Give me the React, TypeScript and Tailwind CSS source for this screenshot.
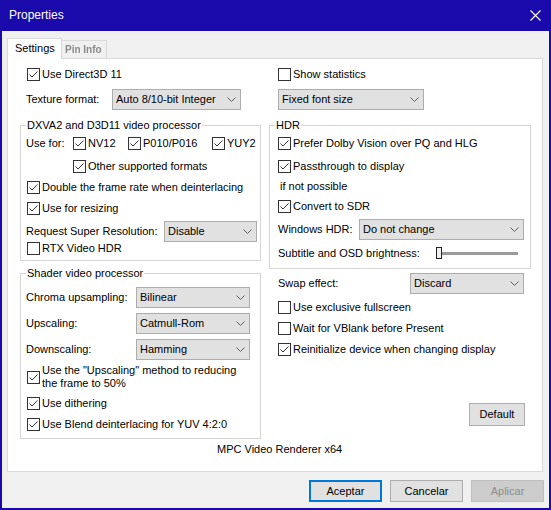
import type { ReactNode } from "react";

function Check({ checked, children, className = "" }: { checked?: boolean; children: ReactNode; className?: string }) {
  return (
    <div className={`flex items-center gap-[2px] ${className}`}>
      <span className="w-[13px] h-[13px] shrink-0 border border-[#333333] bg-white flex">
        {checked && (
          <svg width="11" height="11" viewBox="0 0 11 11">
            <path d="M1.5 5.5 L4 8 L9.5 2.5" fill="none" stroke="#333333" strokeWidth="1" />
          </svg>
        )}
      </span>
      <span>{children}</span>
    </div>
  );
}

function Combo({ value, className = "" }: { value: string; className?: string }) {
  return (
    <div className={`h-[21px] flex items-center justify-between bg-[#e1e1e1] border border-[#adadad] pl-[3px] pr-[4px] ${className}`}>
      <span>{value}</span>
      <svg width="9" height="5" viewBox="0 0 9 5">
        <path d="M0.5 0.5 L4.5 4.5 L8.5 0.5" fill="none" stroke="#606060" strokeWidth="1" />
      </svg>
    </div>
  );
}

function Group({ title, className = "", children }: { title: string; className?: string; children: ReactNode }) {
  return (
    <div className={`relative border border-[#d5d5d5] ${className}`}>
      <span className="absolute top-[-7px] left-[5px] px-[1px] bg-white leading-[13px]">{title}</span>
      {children}
    </div>
  );
}

export default function App() {
  return (
    <div
      className="w-[551px] h-[510px] flex flex-col bg-[#f0f0f0] border-x-2 border-b-2 border-[#1a0aac] text-[11px] leading-[13px] text-black"
      style={{ fontFamily: '"Liberation Sans", Arial, sans-serif' }}
    >
      <div className="h-[31px] shrink-0 bg-[#1a0aac] flex items-center justify-between pl-[7px] pr-[8px] text-white text-[12px]">
        <span>Properties</span>
        <svg width="11" height="11" viewBox="0 0 11 11">
          <path d="M0.5 0.5 L10.5 10.5 M10.5 0.5 L0.5 10.5" stroke="#ffffff" strokeWidth="1.1" />
        </svg>
      </div>

      <div className="mt-[7px] ml-[5px] h-[21px] flex items-end relative z-10 -mb-[1px]">
        <div className="h-[21px] w-[55px] bg-white border-x border-t border-[#d9d9d9] flex items-center pl-[7px] pb-[1px]">
          Settings
        </div>
        <div className="h-[19px] w-[45px] bg-[#f0f0f0] border-t border-r border-b border-[#d9d9d9] flex items-center pl-[3px]">
          <span className="blur-[0.7px] text-[#8a8a8a] font-bold text-[10px]">Pin Info</span>
        </div>
      </div>

      <div className="ml-[5px] w-[536px] h-[414px] bg-white border border-[#d9d9d9] pl-[12px] pt-[7px] flex flex-col">
        <div className="flex">
          {/* left column */}
          <div className="w-[241px] flex flex-col">
            <Check checked className="h-[16px] ml-[7px]">Use Direct3D 11</Check>
            <div className="mt-[7px] flex items-center">
              <span className="ml-[6px] w-[86px]">Texture format:</span>
              <Combo value="Auto 8/10-bit Integer" className="w-[129px]" />
            </div>

            <Group title="DXVA2 and D3D11 video processor" className="mt-[15px] h-[136px]">
              <div className="mt-[9px] h-[16px] flex items-center">
                <span className="ml-[5px] w-[47px]">Use for:</span>
                <Check checked className="w-[55px]">NV12</Check>
                <Check checked className="w-[84px]">P010/P016</Check>
                <Check checked>YUY2</Check>
              </div>
              <Check checked className="mt-[7px] h-[16px] ml-[52px]">Other supported formats</Check>
              <Check checked className="mt-[5px] h-[16px] ml-[6px]">Double the frame rate when deinterlacing</Check>
              <Check checked className="mt-[5px] h-[16px] ml-[6px]">Use for resizing</Check>
              <div className="mt-[5px] flex items-center">
                <span className="ml-[5px] w-[138px]">Request Super Resolution:</span>
                <Combo value="Disable" className="w-[93px]" />
              </div>
              <Check className="-mt-[2px] h-[16px] ml-[6px]">RTX Video HDR</Check>
            </Group>

            <Group title="Shader video processor" className="mt-[12px] h-[166px]">
              <div className="mt-[13px] flex items-center">
                <span className="ml-[5px] w-[110px]">Chroma upsampling:</span>
                <Combo value="Bilinear" className="w-[114px]" />
              </div>
              <div className="mt-[5px] flex items-center">
                <span className="ml-[5px] w-[110px]">Upscaling:</span>
                <Combo value="Catmull-Rom" className="w-[114px]" />
              </div>
              <div className="mt-[5px] flex items-center">
                <span className="ml-[5px] w-[110px]">Downscaling:</span>
                <Combo value="Hamming" className="w-[114px]" />
              </div>
              <Check checked className="mt-[4px] ml-[6px]">
                Use the "Upscaling" method to reducing
                <br />
                the frame to 50%
              </Check>
              <Check checked className="mt-[5px] h-[16px] ml-[6px]">Use dithering</Check>
              <Check checked className="mt-[5px] h-[16px] ml-[6px]">Use Blend deinterlacing for YUV 4:2:0</Check>
            </Group>
          </div>

          {/* right column */}
          <div className="ml-[8px] w-[262px] flex flex-col">
            <Check className="h-[16px] ml-[9px]">Show statistics</Check>
            <Combo value="Fixed font size" className="mt-[7px] ml-[9px] w-[146px]" />

            <Group title="HDR" className="mt-[15px] h-[144px]">
              <Check checked className="mt-[9px] h-[16px] ml-[8px]">Prefer Dolby Vision over PQ and HLG</Check>
              <Check checked className="mt-[7px] h-[16px] ml-[8px]">Passthrough to display</Check>
              <div className="mt-[4px] h-[16px] ml-[10px] flex items-center">if not possible</div>
              <Check checked className="mt-[4px] h-[16px] ml-[8px]">Convert to SDR</Check>
              <div className="mt-[5px] flex items-center">
                <span className="ml-[8px] w-[81px]">Windows HDR:</span>
                <Combo value="Do not change" className="w-[165px]" />
              </div>
              <div className="mt-[5px] h-[16px] flex items-center">
                <span className="ml-[8px] w-[158px]">Subtitle and OSD brightness:</span>
                <span className="w-[6px] h-[12px] border border-[#222222] bg-[#f0f0f0] shrink-0" />
                <span className="w-[76px] h-[3px] bg-[#9a9a9a]" />
              </div>
            </Group>

            <div className="mt-[4px] flex items-center">
              <span className="ml-[9px] w-[132px]">Swap effect:</span>
              <Combo value="Discard" className="w-[114px]" />
            </div>
            <Check className="mt-[5px] h-[16px] ml-[9px]">Use exclusive fullscreen</Check>
            <Check className="mt-[5px] h-[16px] ml-[9px]">Wait for VBlank before Present</Check>
            <Check checked className="mt-[5px] h-[16px] ml-[9px]">Reinitialize device when changing display</Check>
            <button className="mt-[46px] ml-[200px] w-[56px] h-[23px] bg-[#e1e1e1] border border-[#adadad]">
              Default
            </button>
          </div>
        </div>
        <div className="mt-[4px] ml-[197px]">MPC Video Renderer x64</div>
      </div>

      <div className="mt-[8px] pr-[5px] flex justify-end gap-[8px]">
        <button className="w-[73px] h-[22px] bg-[#e1e1e1] border-2 border-[#0078d7]">Aceptar</button>
        <button className="w-[73px] h-[22px] bg-[#e1e1e1] border border-[#adadad]">Cancelar</button>
        <button className="w-[73px] h-[22px] bg-[#cccccc] border border-[#bfbfbf] text-[#8d8d8d]">Aplicar</button>
      </div>
    </div>
  );
}
